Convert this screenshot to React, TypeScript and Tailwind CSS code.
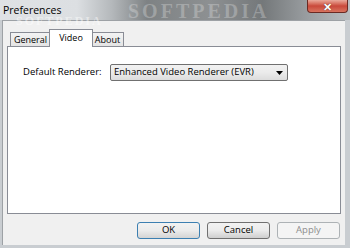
import React from "react";

const ui = { fontFamily: '"Open Sans", "Noto Sans", sans-serif' };

const Tab = ({
  label,
  width,
  active,
}: {
  label: string;
  width: string;
  active?: boolean;
}) =>
  active ? (
    <div
      className={
        "relative z-10 -mx-[2px] -mb-px flex h-[18px] items-start justify-center border border-b-0 border-[#898c95] bg-white pt-[1px] text-[9px] text-black " +
        width
      }
    >
      {label}
    </div>
  ) : (
    <div
      className={
        "flex h-[14px] items-center justify-center border border-b-0 border-[#898c95] bg-gradient-to-b from-[#f3f3f3] to-[#e4e4e4] text-[9px] text-black " +
        width
      }
    >
      {label}
    </div>
  );

const Button = ({
  label,
  variant,
}: {
  label: string;
  variant: "default" | "normal" | "disabled";
}) => {
  const cls =
    variant === "default"
      ? "border-[#3c7fb1] bg-gradient-to-b from-[#f2f2f2] via-[#ebebeb] to-[#d4d4d4] text-black"
      : variant === "normal"
        ? "border-[#707070] bg-gradient-to-b from-[#f2f2f2] via-[#ebebeb] to-[#cfcfcf] text-black"
        : "border-[#adb2b5] bg-[#f4f4f4] text-[#8d8d8d]";
  return (
    <div
      className={
        "flex h-[17px] w-[63px] items-center justify-center rounded-[3px] border text-[9.5px] " +
        cls
      }
    >
      {label}
    </div>
  );
};

export default function App() {
  return (
    <div
      className="relative h-[248px] w-[350px] overflow-hidden bg-[#c9cdd1]"
      style={ui}
    >
      {/* title bar */}
      <div className="relative flex h-[20px] items-center bg-[linear-gradient(90deg,#dfe2e5_0%,#dcdfe2_22%,#b4b8bb_32%,#7e8284_42%,#8d9092_60%,#74787a_75%,#9a9ea1_88%,#b9bdc0_100%)] pl-[3px]">
        <span className="z-10 text-[10.5px] leading-none text-black">
          Preferences
        </span>
        <span
          className="absolute left-[128px] top-[1px] text-[20px] font-bold leading-none tracking-[3px] text-white/25"
          style={{ fontFamily: '"Liberation Serif", serif' }}
        >
          SOFTPEDIA
        </span>
        <div className="absolute right-[2px] top-0 flex h-[13px] w-[41px] items-center justify-center rounded-b-[4px] border border-t-0 border-[#6b2a23] bg-gradient-to-b from-[#e9a99b] via-[#c9483a] to-[#d8735f]">
          <span
            className="text-[11px] font-bold leading-none text-white"
            style={{ textShadow: "0 0 1px #3a0d08" }}
          >
            ✕
          </span>
        </div>
      </div>

      {/* client area */}
      <div className="ml-[2px] mr-[5px] flex h-[225px] flex-col border-l border-t border-[#9da1a5] bg-[#f0f0f0] px-[4px] pt-[7px]">
        <div className="flex h-[18px] items-end pl-[3px]">
          <Tab label="General" width="w-[41px]" />
          <Tab label="Video" width="w-[44px]" active />
          <Tab label="About" width="w-[33px]" />
        </div>
        <div className="flex h-[168px] w-[334px] flex-col border border-[#898c95] bg-white pl-[15px] pt-[17px]">
          <div className="flex items-center gap-[9px]">
            <span className="w-[78px] whitespace-nowrap text-[9.5px] text-black">
              Default Renderer:
            </span>
            <div className="flex h-[17px] w-[178px] items-center justify-between rounded-[2px] border border-[#707070] bg-gradient-to-b from-[#f2f2f2] via-[#ebebeb] to-[#dcdcdc] pl-[3px] pr-[4px] text-[9.5px] text-black">
              <span className="whitespace-nowrap">
                Enhanced Video Renderer (EVR)
              </span>
              <svg width="7" height="4" viewBox="0 0 7 4">
                <path d="M0 0h7L3.5 4z" fill="#000" />
              </svg>
            </div>
          </div>
        </div>
        <div className="mt-[8px] flex justify-end gap-[7px] pr-[1px]">
          <Button label="OK" variant="default" />
          <Button label="Cancel" variant="normal" />
          <Button label="Apply" variant="disabled" />
        </div>
      </div>

      {/* watermark */}
      <span
        className="pointer-events-none absolute left-[16px] top-[15px] text-[12px] font-bold leading-none tracking-[2px] text-white/45"
        style={{ fontFamily: '"Liberation Serif", serif' }}
      >
        SOFTPEDIA
      </span>
    </div>
  );
}
